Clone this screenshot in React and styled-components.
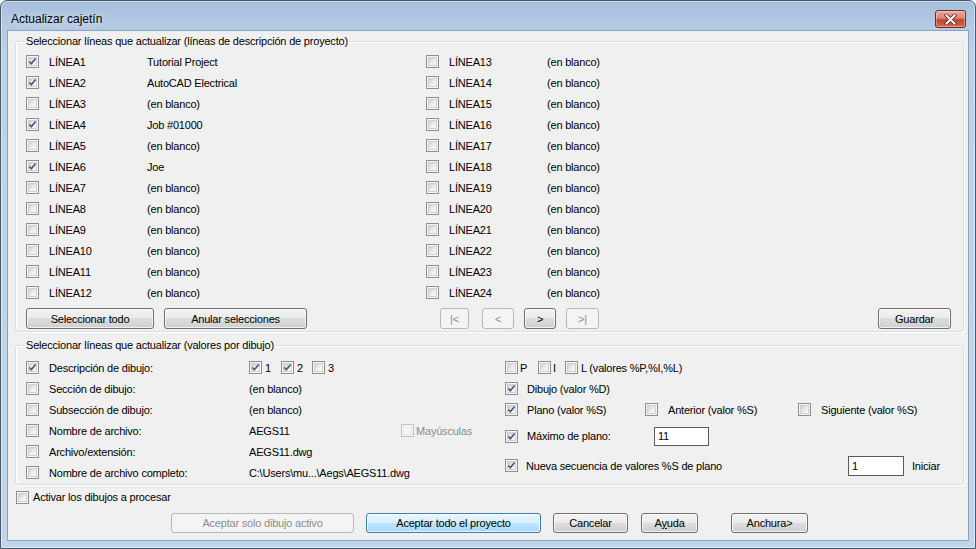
import React from 'react'
import styled, { createGlobalStyle } from 'styled-components'

const GlobalStyle = createGlobalStyle`
  html, body {
    margin: 0;
    padding: 0;
    background: #ffffff;
  }
  body {
    font-family: "Liberation Sans", Arial, sans-serif;
    font-size: 11px;
    letter-spacing: -0.2px;
    color: #000;
  }
  * {
    box-sizing: border-box;
  }
`

const Window = styled.div`
  width: 976px;
  height: 549px;
  border: 1px solid #4b5866;
  border-radius: 7px 7px 0 0;
  background: linear-gradient(180deg, #a6bfdb 0px, #b4cbe5 28px, #bcd3eb 60px, #bfd6ee 100%);
  box-shadow: inset 0 0 0 1px rgba(255, 255, 255, 0.45);
  display: flex;
  flex-direction: column;
  padding: 0 6px 7px 6px;
  overflow: hidden;
`

const TitleBar = styled.div`
  height: 29px;
  display: flex;
  justify-content: space-between;
  align-items: flex-start;
  padding-left: 4px;
`

const TitleText = styled.div`
  margin-top: 11px;
  font-size: 12px;
  line-height: 14px;
  letter-spacing: 0;
  color: #000;
  text-shadow: 0 0 6px rgba(255, 255, 255, 0.9);
`

const CloseButton = styled.div`
  margin-top: 9px;
  margin-right: 3px;
  width: 31px;
  height: 18px;
  border: 1px solid #6e2a22;
  border-radius: 3px;
  background: linear-gradient(180deg, #e9a99c 0%, #d98572 45%, #c3432f 55%, #cf6a50 100%);
  box-shadow: inset 0 0 0 1px rgba(255, 255, 255, 0.35);
  display: flex;
  align-items: center;
  justify-content: center;
`

const Client = styled.div`
  flex: 1;
  background: #f0f0f0;
  border: 1px solid #8ba2bd;
  display: flex;
  flex-direction: column;
`

const GroupBox = styled.fieldset`
  margin: ${p => p.$top}px 4px 0 7px;
  padding: 0 10px ${p => p.$bottom}px 10px;
  border: 1px solid #d5dfe5;
  border-radius: 3px;
  box-shadow: inset 1px 1px 0 #ffffff, 1px 1px 0 #ffffff;
  min-width: 0;
`

const Legend = styled.legend`
  padding: 0 1px;
  margin-left: -1px;
  font-size: 11px;
  line-height: 13px;
`

const LinesGrid = styled.div`
  margin-top: 3px;
  display: grid;
  grid-template-columns: 400px 1fr;
`

const Column = styled.div`
  display: flex;
  flex-direction: column;
`

const LineRow = styled.div`
  height: 21px;
  display: grid;
  grid-template-columns: 23px 98px 1fr;
  align-items: center;
`

const ButtonBar = styled.div`
  margin-top: 5px;
  display: flex;
  align-items: center;
`

const NavGroup = styled.div`
  display: flex;
  margin-left: ${p => p.$left}px;
  margin-right: auto;
`

const Button = styled.div`
  width: ${p => p.$w}px;
  height: ${p => p.$h || 21}px;
  margin-left: ${p => p.$ml || 0}px;
  margin-right: ${p => p.$mr || 0}px;
  flex: none;
  display: flex;
  align-items: center;
  justify-content: center;
  border: 1px solid ${p => (p.$disabled ? '#b5b9bc' : p.$primary ? '#3c7fb1' : '#707070')};
  border-radius: 3px;
  background: ${p =>
    p.$disabled
      ? '#f4f4f4'
      : p.$primary
        ? 'linear-gradient(180deg, #eaf6fd 0%, #d9f0fc 50%, #bee6fd 50%, #a7d9f5 100%)'
        : 'linear-gradient(180deg, #f2f2f2 0%, #ebebeb 50%, #dddddd 50%, #cfcfcf 100%)'};
  box-shadow: inset 0 0 0 1px rgba(255, 255, 255, ${p => (p.$disabled ? 0 : 0.7)});
  color: ${p => (p.$disabled ? '#8d8d8d' : '#000')};
  font-size: 11px;
  white-space: nowrap;
`

const DrawingBody = styled.div`
  margin-top: 5px;
  display: flex;
`

const LeftPane = styled.div`
  width: 479px;
  display: flex;
  flex-direction: column;
`

const RightPane = styled.div`
  flex: 1;
  display: flex;
  flex-direction: column;
`

const FieldRow = styled.div`
  height: 21px;
  display: grid;
  grid-template-columns: 23px 200px 152px auto;
  align-items: center;
`

const OptionRow = styled.div`
  height: ${p => p.$h}px;
  display: flex;
  align-items: center;
`

const Pair = styled.span`
  display: inline-flex;
  align-items: center;
  flex: none;
  gap: ${p => (p.$gap === undefined ? 9 : p.$gap)}px;
  width: ${p => (p.$w ? `${p.$w}px` : 'auto')};
  color: ${p => (p.$disabled ? '#8d8d8d' : '#000')};
  white-space: nowrap;
`

const TextBox = styled.div`
  width: ${p => p.$w}px;
  height: ${p => p.$h}px;
  flex: none;
  background: #ffffff;
  border: 1px solid #5a5a5a;
  padding-left: 3px;
  display: flex;
  align-items: center;
`

const Note = styled.span`
  margin-left: 8px;
`

const WidePath = styled.span`
  grid-column: span 2;
`

const BottomCheck = styled.div`
  margin: 4px 0 0 8px;
  height: 16px;
  display: flex;
  align-items: center;
  gap: 4px;
`

const FooterBar = styled.div`
  margin: 8px 0 0 163px;
  display: flex;
  align-items: center;
`

const Check = ({ checked, disabled }) => (
  <svg width="13" height="13" viewBox="0 0 13 13" style={{ display: 'block', flex: 'none' }}>
    <defs>
      <linearGradient id="cbInner" x1="0" y1="0" x2="1" y2="1">
        <stop offset="0" stopColor="#cbcbcb" />
        <stop offset="0.55" stopColor="#eeeeee" />
        <stop offset="1" stopColor="#fbfbfb" />
      </linearGradient>
    </defs>
    <rect x="0.5" y="0.5" width="12" height="12" fill="#f6f6f6" stroke={disabled ? '#c2c2c2' : '#8e8f8f'} />
    <rect
      x="2.5"
      y="2.5"
      width="8"
      height="8"
      fill={disabled ? '#f4f4f4' : 'url(#cbInner)'}
      stroke={disabled ? '#e8e8e8' : '#d0d0d0'}
    />
    {checked && (
      <path
        d="M3.3 6.5 L5.3 8.8 L9.6 3.4"
        fill="none"
        stroke="#3c578c"
        strokeWidth="1.6"
        strokeLinejoin="round"
      />
    )}
  </svg>
)

const CloseIcon = () => (
  <svg width="13" height="11" viewBox="0 0 13 11">
    <path d="M2.5 1.5 L10.5 9.5 M10.5 1.5 L2.5 9.5" stroke="#5a1f18" strokeWidth="3.6" strokeLinecap="square" />
    <path d="M2.5 1.5 L10.5 9.5 M10.5 1.5 L2.5 9.5" stroke="#ffffff" strokeWidth="2" strokeLinecap="square" />
  </svg>
)

const leftLines = [
  ['LÍNEA1', 'Tutorial Project', true],
  ['LÍNEA2', 'AutoCAD Electrical', true],
  ['LÍNEA3', '(en blanco)', false],
  ['LÍNEA4', 'Job #01000', true],
  ['LÍNEA5', '(en blanco)', false],
  ['LÍNEA6', 'Joe', true],
  ['LÍNEA7', '(en blanco)', false],
  ['LÍNEA8', '(en blanco)', false],
  ['LÍNEA9', '(en blanco)', false],
  ['LÍNEA10', '(en blanco)', false],
  ['LÍNEA11', '(en blanco)', false],
  ['LÍNEA12', '(en blanco)', false],
]

const rightLines = Array.from({ length: 12 }, (_, i) => [`LÍNEA${i + 13}`, '(en blanco)', false])

const LineList = ({ lines }) => (
  <Column>
    {lines.map(([name, value, checked]) => (
      <LineRow key={name}>
        <Check checked={checked} />
        <span>{name}</span>
        <span>{value}</span>
      </LineRow>
    ))}
  </Column>
)

export default function App() {
  return (
    <>
      <GlobalStyle />
      <Window>
        <TitleBar>
          <TitleText>Actualizar cajetín</TitleText>
          <CloseButton>
            <CloseIcon />
          </CloseButton>
        </TitleBar>
        <Client>
          <GroupBox $top={4} $bottom={2}>
            <Legend>Seleccionar líneas que actualizar (líneas de descripción de proyecto)</Legend>
            <LinesGrid>
              <LineList lines={leftLines} />
              <LineList lines={rightLines} />
            </LinesGrid>
            <ButtonBar>
              <Button $w={128}>Seleccionar todo</Button>
              <Button $w={143} $ml={10}>Anular selecciones</Button>
              <NavGroup $left={133}>
                <Button $w={29} $disabled>|&lt;</Button>
                <Button $w={32} $ml={13} $disabled>&lt;</Button>
                <Button $w={32} $ml={10}>&gt;</Button>
                <Button $w={33} $ml={10} $disabled>&gt;|</Button>
              </NavGroup>
              <Button $w={73} $mr={2}>Guardar</Button>
            </ButtonBar>
          </GroupBox>

          <GroupBox $top={7} $bottom={1}>
            <Legend>Seleccionar líneas que actualizar (valores por dibujo)</Legend>
            <DrawingBody>
              <LeftPane>
                <FieldRow>
                  <Check checked />
                  <span>Descripción de dibujo:</span>
                  <OptionRow $h={21}>
                    <Pair $w={32} $gap={3}><Check checked />1</Pair>
                    <Pair $w={31} $gap={3}><Check checked />2</Pair>
                    <Pair $gap={3}><Check />3</Pair>
                  </OptionRow>
                </FieldRow>
                <FieldRow>
                  <Check />
                  <span>Sección de dibujo:</span>
                  <span>(en blanco)</span>
                </FieldRow>
                <FieldRow>
                  <Check />
                  <span>Subsección de dibujo:</span>
                  <span>(en blanco)</span>
                </FieldRow>
                <FieldRow>
                  <Check />
                  <span>Nombre de archivo:</span>
                  <span>AEGS11</span>
                  <Pair $gap={2} $disabled><Check disabled />Mayúsculas</Pair>
                </FieldRow>
                <FieldRow>
                  <Check />
                  <span>Archivo/extensión:</span>
                  <span>AEGS11.dwg</span>
                </FieldRow>
                <FieldRow>
                  <Check />
                  <span>Nombre de archivo completo:</span>
                  <WidePath>C:\Users\mu...\Aegs\AEGS11.dwg</WidePath>
                </FieldRow>
              </LeftPane>
              <RightPane>
                <OptionRow $h={21}>
                  <Pair $w={33} $gap={2}><Check />P</Pair>
                  <Pair $w={27} $gap={2}><Check />I</Pair>
                  <Pair $gap={3}><Check />L (valores %P,%I,%L)</Pair>
                </OptionRow>
                <OptionRow $h={21}>
                  <Pair><Check checked />Dibujo (valor %D)</Pair>
                </OptionRow>
                <OptionRow $h={21}>
                  <Pair $w={140}><Check checked />Plano (valor %S)</Pair>
                  <Pair $w={153} $gap={10}><Check />Anterior (valor %S)</Pair>
                  <Pair $gap={10}><Check />Siguiente (valor %S)</Pair>
                </OptionRow>
                <OptionRow $h={32}>
                  <Pair $w={149}><Check checked />Máximo de plano:</Pair>
                  <TextBox $w={55} $h={19}>11</TextBox>
                </OptionRow>
                <OptionRow $h={27}>
                  <Pair $w={343} $gap={8}><Check checked />Nueva secuencia de valores %S de plano</Pair>
                  <TextBox $w={56} $h={20}>1</TextBox>
                  <Note>Iniciar</Note>
                </OptionRow>
              </RightPane>
            </DrawingBody>
          </GroupBox>

          <BottomCheck>
            <Check />
            <span>Activar los dibujos a procesar</span>
          </BottomCheck>

          <FooterBar>
            <Button $w={183} $h={20} $disabled>Aceptar solo dibujo activo</Button>
            <Button $w={175} $h={20} $ml={12} $primary>Aceptar todo el proyecto</Button>
            <Button $w={75} $h={20} $ml={12}>Cancelar</Button>
            <Button $w={57} $h={20} $ml={13}>A<u>y</u>uda</Button>
            <Button $w={77} $h={20} $ml={33}>Anchura&gt;</Button>
          </FooterBar>
        </Client>
      </Window>
    </>
  )
}
